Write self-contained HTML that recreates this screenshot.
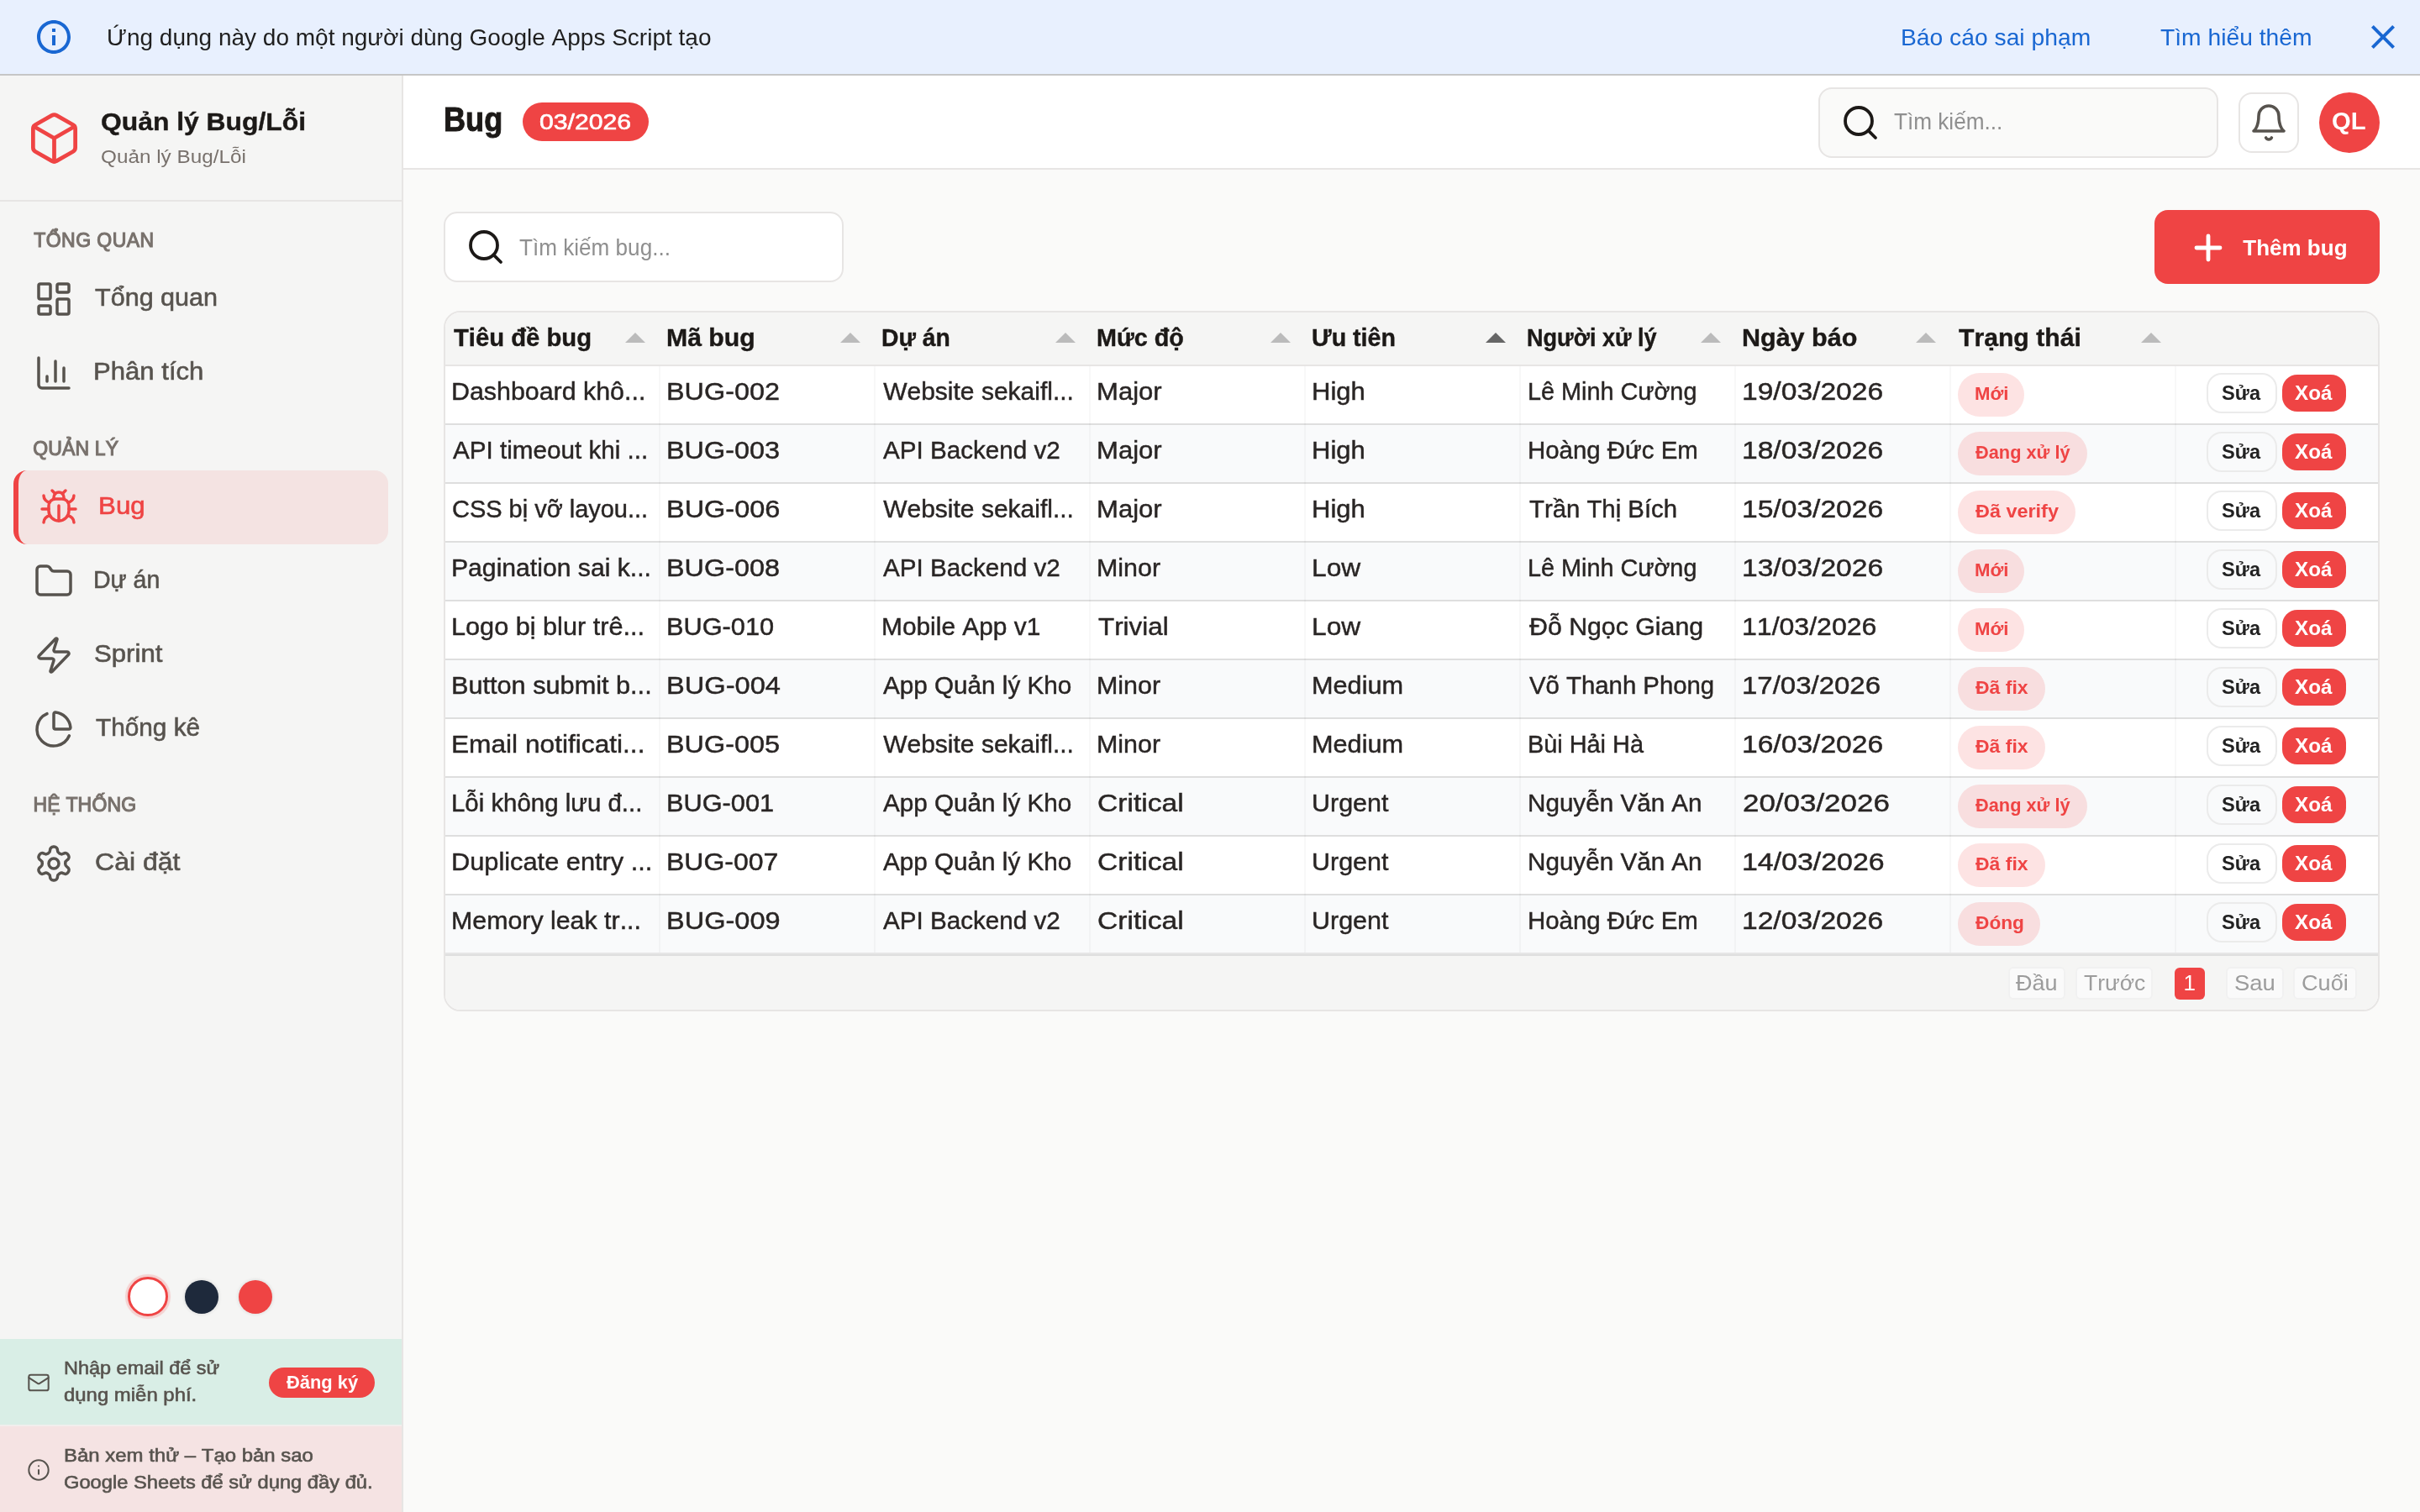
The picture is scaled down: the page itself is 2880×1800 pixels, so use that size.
<!DOCTYPE html>
<html lang="vi"><head><meta charset="utf-8"><title>Quản lý Bug/Lỗi</title>
<style>
html,body{margin:0;padding:0}
body{width:2880px;height:1800px;position:relative;overflow:hidden;background:#fafaf9;font-family:'Liberation Sans',sans-serif;font-kerning:none;font-variant-ligatures:none}
span{position:absolute;white-space:pre;line-height:1;transform-origin:0 0;font-family:'Liberation Sans',sans-serif;}
</style></head><body>
<div style="position:absolute;left:0px;top:0px;width:2880px;height:88px;background:#e8f0fe"></div>
<div style="position:absolute;left:0px;top:88px;width:2880px;height:2px;background:#c6c6c6"></div>
<svg style="position:absolute;left:40px;top:20px" width="48" height="48" viewBox="0 0 24 24" fill="#1967d2"><path d="M11 7h2v2h-2zm0 4h2v6h-2zm1-9C6.48 2 2 6.48 2 12s4.48 10 10 10 10-4.48 10-10S17.52 2 12 2zm0 18c-4.41 0-8-3.59-8-8s3.59-8 8-8 8 3.59 8 8-3.59 8-8 8z"/></svg>
<svg style="position:absolute;left:2812px;top:20px" width="48" height="48" viewBox="0 0 24 24" fill="#1967d2"><path d="M19 6.41L17.59 5 12 10.59 6.41 5 5 6.41 10.59 12 5 17.59 6.41 19 12 13.41 17.59 19 19 17.59 13.41 12z"/></svg>
<div style="position:absolute;left:0px;top:90px;width:478px;height:1710px;background:#f5f5f4"></div>
<div style="position:absolute;left:478px;top:90px;width:2px;height:1710px;background:#e7e5e4"></div>
<div style="position:absolute;left:0px;top:238px;width:478px;height:2px;background:#e7e5e4"></div>
<svg style="position:absolute;left:30.5px;top:130.5px" width="67" height="67" viewBox="0 0 24 24" fill="none" stroke="#ef4444" stroke-width="1.7" stroke-linecap="round" stroke-linejoin="round"><path d="M21 8a2 2 0 0 0-1-1.73l-7-4a2 2 0 0 0-2 0l-7 4A2 2 0 0 0 3 8v8a2 2 0 0 0 1 1.73l7 4a2 2 0 0 0 2 0l7-4A2 2 0 0 0 21 16Z"/><path d="m3.3 7 8.7 5 8.7-5"/><path d="M12 22V12"/></svg>
<div style="position:absolute;left:16px;top:560px;width:446px;height:88px;box-sizing:border-box;background:rgba(239,68,68,0.10);border-left:6px solid #ef4444;border-radius:16px"></div>
<svg style="position:absolute;left:40.0px;top:332.0px" width="48" height="48" viewBox="0 0 24 24" fill="none" stroke="#57534e" stroke-width="1.75" stroke-linecap="round" stroke-linejoin="round"><rect width="7" height="9" x="3" y="3" rx="1"/><rect width="7" height="5" x="14" y="3" rx="1"/><rect width="7" height="9" x="14" y="12" rx="1"/><rect width="7" height="5" x="3" y="16" rx="1"/></svg>
<svg style="position:absolute;left:40.0px;top:420.0px" width="48" height="48" viewBox="0 0 24 24" fill="none" stroke="#57534e" stroke-width="1.75" stroke-linecap="round" stroke-linejoin="round"><path d="M3 3v16a2 2 0 0 0 2 2h16"/><path d="M18 17V9"/><path d="M13 17V5"/><path d="M8 17v-3"/></svg>
<svg style="position:absolute;left:46.0px;top:580.0px" width="48" height="48" viewBox="0 0 24 24" fill="none" stroke="#ef4444" stroke-width="1.75" stroke-linecap="round" stroke-linejoin="round"><path d="m8 2 1.88 1.88"/><path d="M14.12 3.88 16 2"/><path d="M9 7.13v-1a3.003 3.003 0 1 1 6 0v1"/><path d="M12 20c-3.3 0-6-2.7-6-6v-3a4 4 0 0 1 4-4h4a4 4 0 0 1 4 4v3c0 3.3-2.7 6-6 6"/><path d="M12 20v-9"/><path d="M6.53 9C4.6 8.8 3 7.1 3 5"/><path d="M6 13H2"/><path d="M3 21c0-2.1 1.7-3.9 3.8-4"/><path d="M20.97 5c0 2.1-1.6 3.8-3.5 4"/><path d="M22 13h-4"/><path d="M17.2 17c2.1.1 3.8 1.9 3.8 4"/></svg>
<svg style="position:absolute;left:40.0px;top:668.0px" width="48" height="48" viewBox="0 0 24 24" fill="none" stroke="#57534e" stroke-width="1.75" stroke-linecap="round" stroke-linejoin="round"><path d="M20 20a2 2 0 0 0 2-2V8a2 2 0 0 0-2-2h-7.9a2 2 0 0 1-1.69-.9L9.6 3.9A2 2 0 0 0 7.93 3H4a2 2 0 0 0-2 2v13a2 2 0 0 0 2 2Z"/></svg>
<svg style="position:absolute;left:40.0px;top:756.0px" width="48" height="48" viewBox="0 0 24 24" fill="none" stroke="#57534e" stroke-width="1.75" stroke-linecap="round" stroke-linejoin="round"><path d="M4 14a1 1 0 0 1-.78-1.63l9.9-10.2a.5.5 0 0 1 .86.46l-1.92 6.02A1 1 0 0 0 13 10h7a1 1 0 0 1 .78 1.63l-9.9 10.2a.5.5 0 0 1-.86-.46l1.92-6.02A1 1 0 0 0 11 14z"/></svg>
<svg style="position:absolute;left:40.0px;top:844.0px" width="48" height="48" viewBox="0 0 24 24" fill="none" stroke="#57534e" stroke-width="1.75" stroke-linecap="round" stroke-linejoin="round"><path d="M21 12c.552 0 1.005-.449.95-.998a10 10 0 0 0-8.953-8.951c-.55-.055-.998.398-.998.95v8a1 1 0 0 0 1 1z"/><path d="M21.21 15.89A10 10 0 1 1 8 2.83"/></svg>
<svg style="position:absolute;left:40.0px;top:1004.0px" width="48" height="48" viewBox="0 0 24 24" fill="none" stroke="#57534e" stroke-width="1.75" stroke-linecap="round" stroke-linejoin="round"><path d="M12.22 2h-.44a2 2 0 0 0-2 2v.18a2 2 0 0 1-1 1.73l-.43.25a2 2 0 0 1-2 0l-.15-.08a2 2 0 0 0-2.73.73l-.22.38a2 2 0 0 0 .73 2.73l.15.1a2 2 0 0 1 1 1.72v.51a2 2 0 0 1-1 1.74l-.15.09a2 2 0 0 0-.73 2.73l.22.38a2 2 0 0 0 2.73.73l.15-.08a2 2 0 0 1 2 0l.43.25a2 2 0 0 1 1 1.73V20a2 2 0 0 0 2 2h.44a2 2 0 0 0 2-2v-.18a2 2 0 0 1 1-1.73l.43-.25a2 2 0 0 1 2 0l.15.08a2 2 0 0 0 2.73-.73l.22-.39a2 2 0 0 0-.73-2.73l-.15-.08a2 2 0 0 1-1-1.74v-.5a2 2 0 0 1 1-1.74l.15-.09a2 2 0 0 0 .73-2.73l-.22-.38a2 2 0 0 0-2.73-.73l-.15.08a2 2 0 0 1-2 0l-.43-.25a2 2 0 0 1-1-1.73V4a2 2 0 0 0-2-2z"/><circle cx="12" cy="12" r="3"/></svg>
<div style="position:absolute;left:152.2px;top:1519.8px;width:47.6px;height:47.6px;box-sizing:border-box;border-radius:50%;background:#fff;border:3.7px solid #ef4444;box-shadow:0 0 1px 3px rgba(239,68,68,0.2)"></div>
<div style="position:absolute;left:220px;top:1524px;width:40px;height:40px;border-radius:50%;background:#1e293b;box-shadow:0 0 3px 2px rgba(0,0,0,0.06)"></div>
<div style="position:absolute;left:284px;top:1524px;width:40px;height:40px;border-radius:50%;background:#ef4444;box-shadow:0 0 3px 2px rgba(0,0,0,0.06)"></div>
<div style="position:absolute;left:0px;top:1594px;width:478px;height:102px;background:#d9eee6"></div>
<svg style="position:absolute;left:32.0px;top:1631.5px" width="28" height="28" viewBox="0 0 24 24" fill="none" stroke="#57534e" stroke-width="1.75" stroke-linecap="round" stroke-linejoin="round"><rect width="20" height="16" x="2" y="4" rx="2"/><path d="m22 7-8.97 5.7a1.94 1.94 0 0 1-2.06 0L2 7"/></svg>
<div style="position:absolute;left:320px;top:1628px;width:126px;height:36px;border-radius:18px;background:#ef4444"></div>
<div style="position:absolute;left:0px;top:1696px;width:478px;height:2px;background:#f1eeed"></div>
<div style="position:absolute;left:0px;top:1698px;width:478px;height:102px;background:#f5e3e3"></div>
<svg style="position:absolute;left:32.0px;top:1735.7px" width="28" height="28" viewBox="0 0 24 24" fill="none" stroke="#57534e" stroke-width="1.75" stroke-linecap="round" stroke-linejoin="round"><circle cx="12" cy="12" r="10"/><path d="M12 16v-4"/><path d="M12 8h.01"/></svg>
<div style="position:absolute;left:480px;top:90px;width:2400px;height:110px;background:#fff"></div>
<div style="position:absolute;left:480px;top:200px;width:2400px;height:2px;background:#e7e5e4"></div>
<div style="position:absolute;left:622px;top:122px;width:150px;height:46px;border-radius:23px;background:#ef4444"></div>
<div style="position:absolute;left:2164px;top:104px;width:476px;height:84px;box-sizing:border-box;border:2px solid #e7e5e4;border-radius:16px;background:#fafaf9"></div>
<svg style="position:absolute;left:2190.0px;top:122.0px" width="48" height="48" viewBox="0 0 24 24" fill="none" stroke="#1c1917" stroke-width="1.9" stroke-linecap="round" stroke-linejoin="round"><circle cx="11" cy="11" r="8"/><path d="m21 21-4.3-4.3"/></svg>
<div style="position:absolute;left:2664px;top:110px;width:72px;height:72px;box-sizing:border-box;border:2px solid #e7e5e4;border-radius:16px;background:#fff"></div>
<svg style="position:absolute;left:2676.0px;top:122.0px" width="48" height="48" viewBox="0 0 24 24" fill="none" stroke="#57534e" stroke-width="1.8" stroke-linecap="round" stroke-linejoin="round"><path d="M6 8a6 6 0 0 1 12 0c0 7 3 9 3 9H3s3-2 3-9"/><path d="M10.3 21a1.94 1.94 0 0 0 3.4 0"/></svg>
<div style="position:absolute;left:2760px;top:110px;width:72px;height:72px;border-radius:50%;background:#ef4444"></div>
<div style="position:absolute;left:528px;top:252px;width:476px;height:84px;box-sizing:border-box;border:2px solid #e7e5e4;border-radius:16px;background:#fff"></div>
<svg style="position:absolute;left:554.0px;top:270.0px" width="48" height="48" viewBox="0 0 24 24" fill="none" stroke="#1c1917" stroke-width="1.9" stroke-linecap="round" stroke-linejoin="round"><circle cx="11" cy="11" r="8"/><path d="m21 21-4.3-4.3"/></svg>
<div style="position:absolute;left:2564px;top:250px;width:268px;height:88px;border-radius:16px;background:#ef4444"></div>
<svg style="position:absolute;left:2604.0px;top:270.5px" width="48" height="48" viewBox="0 0 24 24" fill="none" stroke="#fff" stroke-width="2.4" stroke-linecap="round" stroke-linejoin="round"><path d="M5 12h14"/><path d="M12 5v14"/></svg>
<div style="position:absolute;left:528px;top:370px;width:2304px;height:834px;box-sizing:border-box;border:2px solid #e7e5e4;border-radius:20px;background:#fff;overflow:hidden"><div style="position:absolute;left:0;top:0;width:2300px;height:62px;background:#f5f5f4"></div><div style="position:absolute;left:0;top:62px;width:2300px;height:2px;background:#e7e5e4"></div><div style="position:absolute;left:0;top:64px;width:2300px;height:68px;background:#fff"></div><div style="position:absolute;left:0;top:132px;width:2300px;height:2px;background:#dedede"></div><div style="position:absolute;left:0;top:134px;width:2300px;height:68px;background:#f9fafb"></div><div style="position:absolute;left:0;top:202px;width:2300px;height:2px;background:#dedede"></div><div style="position:absolute;left:0;top:204px;width:2300px;height:68px;background:#fff"></div><div style="position:absolute;left:0;top:272px;width:2300px;height:2px;background:#dedede"></div><div style="position:absolute;left:0;top:274px;width:2300px;height:68px;background:#f9fafb"></div><div style="position:absolute;left:0;top:342px;width:2300px;height:2px;background:#dedede"></div><div style="position:absolute;left:0;top:344px;width:2300px;height:68px;background:#fff"></div><div style="position:absolute;left:0;top:412px;width:2300px;height:2px;background:#dedede"></div><div style="position:absolute;left:0;top:414px;width:2300px;height:68px;background:#f9fafb"></div><div style="position:absolute;left:0;top:482px;width:2300px;height:2px;background:#dedede"></div><div style="position:absolute;left:0;top:484px;width:2300px;height:68px;background:#fff"></div><div style="position:absolute;left:0;top:552px;width:2300px;height:2px;background:#dedede"></div><div style="position:absolute;left:0;top:554px;width:2300px;height:68px;background:#f9fafb"></div><div style="position:absolute;left:0;top:622px;width:2300px;height:2px;background:#dedede"></div><div style="position:absolute;left:0;top:624px;width:2300px;height:68px;background:#fff"></div><div style="position:absolute;left:0;top:692px;width:2300px;height:2px;background:#dedede"></div><div style="position:absolute;left:0;top:694px;width:2300px;height:68px;background:#f9fafb"></div><div style="position:absolute;left:0;top:762px;width:2300px;height:2px;background:#dedede"></div><div style="position:absolute;left:254px;top:64px;width:2px;height:698px;background:rgba(0,0,0,0.027)"></div><div style="position:absolute;left:510px;top:64px;width:2px;height:698px;background:rgba(0,0,0,0.027)"></div><div style="position:absolute;left:766px;top:64px;width:2px;height:698px;background:rgba(0,0,0,0.027)"></div><div style="position:absolute;left:1022px;top:64px;width:2px;height:698px;background:rgba(0,0,0,0.027)"></div><div style="position:absolute;left:1278px;top:64px;width:2px;height:698px;background:rgba(0,0,0,0.027)"></div><div style="position:absolute;left:1534px;top:64px;width:2px;height:698px;background:rgba(0,0,0,0.027)"></div><div style="position:absolute;left:1790px;top:64px;width:2px;height:698px;background:rgba(0,0,0,0.027)"></div><div style="position:absolute;left:2058px;top:64px;width:2px;height:698px;background:rgba(0,0,0,0.027)"></div><div style="position:absolute;left:0;top:762px;width:2300px;height:2px;background:#e6e6e6"></div><div style="position:absolute;left:0;top:764px;width:2300px;height:2px;background:#dfdfdf"></div><div style="position:absolute;left:0;top:766px;width:2300px;height:64px;background:#f5f5f4"></div></div>
<div style="position:absolute;left:744px;top:396px;width:0;height:0;border-left:12px solid transparent;border-right:12px solid transparent;border-bottom:12px solid #bbb"></div>
<div style="position:absolute;left:1000px;top:396px;width:0;height:0;border-left:12px solid transparent;border-right:12px solid transparent;border-bottom:12px solid #bbb"></div>
<div style="position:absolute;left:1256px;top:396px;width:0;height:0;border-left:12px solid transparent;border-right:12px solid transparent;border-bottom:12px solid #bbb"></div>
<div style="position:absolute;left:1512px;top:396px;width:0;height:0;border-left:12px solid transparent;border-right:12px solid transparent;border-bottom:12px solid #bbb"></div>
<div style="position:absolute;left:1768px;top:396px;width:0;height:0;border-left:12px solid transparent;border-right:12px solid transparent;border-bottom:12px solid #666"></div>
<div style="position:absolute;left:2024px;top:396px;width:0;height:0;border-left:12px solid transparent;border-right:12px solid transparent;border-bottom:12px solid #bbb"></div>
<div style="position:absolute;left:2280px;top:396px;width:0;height:0;border-left:12px solid transparent;border-right:12px solid transparent;border-bottom:12px solid #bbb"></div>
<div style="position:absolute;left:2548px;top:396px;width:0;height:0;border-left:12px solid transparent;border-right:12px solid transparent;border-bottom:12px solid #bbb"></div>
<div style="position:absolute;left:2330px;top:444px;width:79px;height:52px;border-radius:26px;background:rgba(239,68,68,0.15)"></div>
<div style="position:absolute;left:2626px;top:444px;width:84px;height:48px;box-sizing:border-box;border:2px solid #ebebeb;border-radius:18px;background:#fff"></div>
<div style="position:absolute;left:2716px;top:446px;width:76px;height:44px;border-radius:18px;background:#ef4444"></div>
<div style="position:absolute;left:2330px;top:514px;width:154px;height:52px;border-radius:26px;background:rgba(239,68,68,0.15)"></div>
<div style="position:absolute;left:2626px;top:514px;width:84px;height:48px;box-sizing:border-box;border:2px solid #ebebeb;border-radius:18px;background:#f9fafb"></div>
<div style="position:absolute;left:2716px;top:516px;width:76px;height:44px;border-radius:18px;background:#ef4444"></div>
<div style="position:absolute;left:2330px;top:584px;width:140px;height:52px;border-radius:26px;background:rgba(239,68,68,0.15)"></div>
<div style="position:absolute;left:2626px;top:584px;width:84px;height:48px;box-sizing:border-box;border:2px solid #ebebeb;border-radius:18px;background:#fff"></div>
<div style="position:absolute;left:2716px;top:586px;width:76px;height:44px;border-radius:18px;background:#ef4444"></div>
<div style="position:absolute;left:2330px;top:654px;width:79px;height:52px;border-radius:26px;background:rgba(239,68,68,0.15)"></div>
<div style="position:absolute;left:2626px;top:654px;width:84px;height:48px;box-sizing:border-box;border:2px solid #ebebeb;border-radius:18px;background:#f9fafb"></div>
<div style="position:absolute;left:2716px;top:656px;width:76px;height:44px;border-radius:18px;background:#ef4444"></div>
<div style="position:absolute;left:2330px;top:724px;width:79px;height:52px;border-radius:26px;background:rgba(239,68,68,0.15)"></div>
<div style="position:absolute;left:2626px;top:724px;width:84px;height:48px;box-sizing:border-box;border:2px solid #ebebeb;border-radius:18px;background:#fff"></div>
<div style="position:absolute;left:2716px;top:726px;width:76px;height:44px;border-radius:18px;background:#ef4444"></div>
<div style="position:absolute;left:2330px;top:794px;width:104px;height:52px;border-radius:26px;background:rgba(239,68,68,0.15)"></div>
<div style="position:absolute;left:2626px;top:794px;width:84px;height:48px;box-sizing:border-box;border:2px solid #ebebeb;border-radius:18px;background:#f9fafb"></div>
<div style="position:absolute;left:2716px;top:796px;width:76px;height:44px;border-radius:18px;background:#ef4444"></div>
<div style="position:absolute;left:2330px;top:864px;width:104px;height:52px;border-radius:26px;background:rgba(239,68,68,0.15)"></div>
<div style="position:absolute;left:2626px;top:864px;width:84px;height:48px;box-sizing:border-box;border:2px solid #ebebeb;border-radius:18px;background:#fff"></div>
<div style="position:absolute;left:2716px;top:866px;width:76px;height:44px;border-radius:18px;background:#ef4444"></div>
<div style="position:absolute;left:2330px;top:934px;width:154px;height:52px;border-radius:26px;background:rgba(239,68,68,0.15)"></div>
<div style="position:absolute;left:2626px;top:934px;width:84px;height:48px;box-sizing:border-box;border:2px solid #ebebeb;border-radius:18px;background:#f9fafb"></div>
<div style="position:absolute;left:2716px;top:936px;width:76px;height:44px;border-radius:18px;background:#ef4444"></div>
<div style="position:absolute;left:2330px;top:1004px;width:104px;height:52px;border-radius:26px;background:rgba(239,68,68,0.15)"></div>
<div style="position:absolute;left:2626px;top:1004px;width:84px;height:48px;box-sizing:border-box;border:2px solid #ebebeb;border-radius:18px;background:#fff"></div>
<div style="position:absolute;left:2716px;top:1006px;width:76px;height:44px;border-radius:18px;background:#ef4444"></div>
<div style="position:absolute;left:2330px;top:1074px;width:98px;height:52px;border-radius:26px;background:rgba(239,68,68,0.15)"></div>
<div style="position:absolute;left:2626px;top:1074px;width:84px;height:48px;box-sizing:border-box;border:2px solid #ebebeb;border-radius:18px;background:#f9fafb"></div>
<div style="position:absolute;left:2716px;top:1076px;width:76px;height:44px;border-radius:18px;background:#ef4444"></div>
<div style="position:absolute;left:2390px;top:1151px;width:68px;height:39px;box-sizing:border-box;border:2px solid rgba(0,0,0,0.035);border-radius:6px;background:rgba(255,255,255,0.5)"></div>
<div style="position:absolute;left:2470px;top:1151px;width:92px;height:39px;box-sizing:border-box;border:2px solid rgba(0,0,0,0.035);border-radius:6px;background:rgba(255,255,255,0.5)"></div>
<div style="position:absolute;left:2649px;top:1151px;width:69px;height:39px;box-sizing:border-box;border:2px solid rgba(0,0,0,0.035);border-radius:6px;background:rgba(255,255,255,0.5)"></div>
<div style="position:absolute;left:2729px;top:1151px;width:76px;height:39px;box-sizing:border-box;border:2px solid rgba(0,0,0,0.035);border-radius:6px;background:rgba(255,255,255,0.5)"></div>
<div style="position:absolute;left:2588px;top:1152px;width:36px;height:38px;border-radius:6px;background:#ef4444"></div>
<div style="position:absolute;left:0;top:0;width:2880px;height:1800px;will-change:transform">
<span style="left:127.0px;top:31.0px;font-size:28px;font-weight:400;color:#1f1f1f;">Ứng dụng này do một người dùng Google Apps Script tạo</span>
<span style="left:2262.0px;top:30.5px;font-size:28px;font-weight:400;color:#1967d2;transform:scaleX(1.0091);">Báo cáo sai phạm</span>
<span style="left:2570.5px;top:30.5px;font-size:28px;font-weight:400;color:#1967d2;transform:scaleX(1.0085);">Tìm hiểu thêm</span>
<span style="left:120.4px;top:130.4px;font-size:30px;font-weight:700;color:#1c1917;transform:scaleX(1.0608);-webkit-text-stroke:0.4px #1c1917;">Quản lý Bug/Lỗi</span>
<span style="left:119.9px;top:175.8px;font-size:22px;font-weight:400;color:#78716c;transform:scaleX(1.1039);">Quản lý Bug/Lỗi</span>
<span style="left:40.3px;top:275.0px;font-size:23px;font-weight:400;color:#78716c;-webkit-text-stroke:1.1px #78716c;letter-spacing:0.44px;">TỔNG QUAN</span>
<span style="left:39.3px;top:523.0px;font-size:23px;font-weight:400;color:#78716c;-webkit-text-stroke:1.1px #78716c;letter-spacing:0.12px;">QUẢN LÝ</span>
<span style="left:39.6px;top:947.0px;font-size:23px;font-weight:400;color:#78716c;-webkit-text-stroke:1.1px #78716c;letter-spacing:0.16px;">HỆ THỐNG</span>
<span style="left:112.6px;top:339.0px;font-size:30px;font-weight:400;color:#57534e;transform:scaleX(1.0183);-webkit-text-stroke:0.6px #57534e;">Tổng quan</span>
<span style="left:111.1px;top:427.0px;font-size:30px;font-weight:400;color:#57534e;transform:scaleX(1.0366);-webkit-text-stroke:0.6px #57534e;">Phân tích</span>
<span style="left:116.7px;top:587.0px;font-size:30px;font-weight:400;color:#ef4444;transform:scaleX(1.0440);-webkit-text-stroke:0.6px #ef4444;">Bug</span>
<span style="left:111.1px;top:675.0px;font-size:30px;font-weight:400;color:#57534e;transform:scaleX(0.9500);-webkit-text-stroke:0.6px #57534e;">Dự án</span>
<span style="left:112.2px;top:763.0px;font-size:30px;font-weight:400;color:#57534e;transform:scaleX(1.0385);-webkit-text-stroke:0.6px #57534e;">Sprint</span>
<span style="left:113.9px;top:851.0px;font-size:30px;font-weight:400;color:#57534e;transform:scaleX(0.9919);-webkit-text-stroke:0.6px #57534e;">Thống kê</span>
<span style="left:112.8px;top:1011.0px;font-size:30px;font-weight:400;color:#57534e;transform:scaleX(1.0681);-webkit-text-stroke:0.6px #57534e;">Cài đặt</span>
<span style="left:75.8px;top:1618.0px;font-size:22px;font-weight:400;color:#57534e;transform:scaleX(1.0665);-webkit-text-stroke:0.6px #57534e;">Nhập email để sử</span>
<span style="left:75.8px;top:1650.0px;font-size:22px;font-weight:400;color:#57534e;transform:scaleX(1.0874);-webkit-text-stroke:0.6px #57534e;">dụng miễn phí.</span>
<span style="left:341.0px;top:1635.3px;font-size:22px;font-weight:700;color:#fff;transform:scaleX(0.9953);">Đăng ký</span>
<span style="left:75.8px;top:1722.0px;font-size:22px;font-weight:400;color:#57534e;transform:scaleX(1.0886);-webkit-text-stroke:0.6px #57534e;">Bản xem thử – Tạo bản sao</span>
<span style="left:75.8px;top:1753.5px;font-size:22px;font-weight:400;color:#57534e;transform:scaleX(1.0770);-webkit-text-stroke:0.6px #57534e;">Google Sheets để sử dụng đầy đủ.</span>
<span style="left:528.4px;top:122.0px;font-size:40px;font-weight:700;color:#1c1917;transform:scaleX(0.9027);-webkit-text-stroke:1px #1c1917;">Bug</span>
<span style="left:642.0px;top:133.0px;font-size:25px;font-weight:400;color:#fff;transform:scaleX(1.2079);-webkit-text-stroke:0.6px #fff;">03/2026</span>
<span style="left:2254.0px;top:131.4px;font-size:28px;font-weight:400;color:#8f8f8f;transform:scaleX(0.9341);">Tìm kiếm...</span>
<span style="left:2775.0px;top:129.8px;font-size:29px;font-weight:700;color:#fff;transform:scaleX(1.0079);">QL</span>
<span style="left:617.9px;top:280.8px;font-size:28px;font-weight:400;color:#8f8f8f;transform:scaleX(0.9326);">Tìm kiếm bug...</span>
<span style="left:2669.3px;top:281.8px;font-size:26px;font-weight:700;color:#fff;">Thêm bug</span>
<span style="left:539.8px;top:387.0px;font-size:30px;font-weight:700;color:#1c1917;transform:scaleX(0.9743);-webkit-text-stroke:0.4px #1c1917;">Tiêu đề bug</span>
<span style="left:793.2px;top:387.0px;font-size:30px;font-weight:700;color:#1c1917;transform:scaleX(1.0069);-webkit-text-stroke:0.4px #1c1917;">Mã bug</span>
<span style="left:1048.7px;top:387.0px;font-size:30px;font-weight:700;color:#1c1917;transform:scaleX(0.9434);-webkit-text-stroke:0.4px #1c1917;">Dự án</span>
<span style="left:1305.0px;top:387.0px;font-size:30px;font-weight:700;color:#1c1917;transform:scaleX(0.9590);-webkit-text-stroke:0.4px #1c1917;">Mức độ</span>
<span style="left:1560.9px;top:387.0px;font-size:30px;font-weight:700;color:#1c1917;transform:scaleX(0.9525);-webkit-text-stroke:0.4px #1c1917;">Ưu tiên</span>
<span style="left:1816.5px;top:387.0px;font-size:30px;font-weight:700;color:#1c1917;transform:scaleX(0.9018);-webkit-text-stroke:0.4px #1c1917;">Người xử lý</span>
<span style="left:2072.7px;top:387.0px;font-size:30px;font-weight:700;color:#1c1917;transform:scaleX(1.0167);-webkit-text-stroke:0.4px #1c1917;">Ngày báo</span>
<span style="left:2331.2px;top:387.0px;font-size:30px;font-weight:700;color:#1c1917;transform:scaleX(1.0056);-webkit-text-stroke:0.4px #1c1917;">Trạng thái</span>
<span style="left:536.8px;top:450.5px;font-size:30px;font-weight:400;color:#292524;transform:scaleX(1.0125);-webkit-text-stroke:0.45px #292524;">Dashboard khô...</span>
<span style="left:792.8px;top:450.5px;font-size:30px;font-weight:400;color:#292524;transform:scaleX(1.0787);-webkit-text-stroke:0.45px #292524;">BUG-002</span>
<span style="left:1051.2px;top:450.5px;font-size:30px;font-weight:400;color:#292524;-webkit-text-stroke:0.45px #292524;">Website sekaifl...</span>
<span style="left:1305.1px;top:450.5px;font-size:30px;font-weight:400;color:#292524;transform:scaleX(1.0356);-webkit-text-stroke:0.45px #292524;">Major</span>
<span style="left:1560.8px;top:450.5px;font-size:30px;font-weight:400;color:#292524;transform:scaleX(1.0345);-webkit-text-stroke:0.45px #292524;">High</span>
<span style="left:1817.6px;top:450.5px;font-size:30px;font-weight:400;color:#292524;transform:scaleX(0.9597);-webkit-text-stroke:0.45px #292524;">Lê Minh Cường</span>
<span style="left:2073.0px;top:450.5px;font-size:30px;font-weight:400;color:#292524;transform:scaleX(1.1197);-webkit-text-stroke:0.45px #292524;">19/03/2026</span>
<span style="left:2349.7px;top:458.0px;font-size:22px;font-weight:700;color:#ef4444;transform:scaleX(1.0079);">Mới</span>
<span style="left:2644.0px;top:455.6px;font-size:24px;font-weight:700;color:#222;transform:scaleX(0.9848);">Sửa</span>
<span style="left:2730.7px;top:455.6px;font-size:24px;font-weight:700;color:#fff;transform:scaleX(1.0093);">Xoá</span>
<span style="left:538.8px;top:520.5px;font-size:30px;font-weight:400;color:#292524;transform:scaleX(0.9880);-webkit-text-stroke:0.45px #292524;">API timeout khi ...</span>
<span style="left:792.8px;top:520.5px;font-size:30px;font-weight:400;color:#292524;transform:scaleX(1.0787);-webkit-text-stroke:0.45px #292524;">BUG-003</span>
<span style="left:1051.2px;top:520.5px;font-size:30px;font-weight:400;color:#292524;transform:scaleX(0.9873);-webkit-text-stroke:0.45px #292524;">API Backend v2</span>
<span style="left:1305.1px;top:520.5px;font-size:30px;font-weight:400;color:#292524;transform:scaleX(1.0356);-webkit-text-stroke:0.45px #292524;">Major</span>
<span style="left:1560.8px;top:520.5px;font-size:30px;font-weight:400;color:#292524;transform:scaleX(1.0345);-webkit-text-stroke:0.45px #292524;">High</span>
<span style="left:1817.5px;top:520.5px;font-size:30px;font-weight:400;color:#292524;transform:scaleX(0.9803);-webkit-text-stroke:0.45px #292524;">Hoàng Đức Em</span>
<span style="left:2073.0px;top:520.5px;font-size:30px;font-weight:400;color:#292524;transform:scaleX(1.1197);-webkit-text-stroke:0.45px #292524;">18/03/2026</span>
<span style="left:2350.7px;top:528.0px;font-size:22px;font-weight:700;color:#ef4444;transform:scaleX(0.9895);">Đang xử lý</span>
<span style="left:2644.0px;top:525.6px;font-size:24px;font-weight:700;color:#222;transform:scaleX(0.9848);">Sửa</span>
<span style="left:2730.7px;top:525.6px;font-size:24px;font-weight:700;color:#fff;transform:scaleX(1.0093);">Xoá</span>
<span style="left:537.8px;top:590.5px;font-size:30px;font-weight:400;color:#292524;transform:scaleX(0.9655);-webkit-text-stroke:0.45px #292524;">CSS bị vỡ layou...</span>
<span style="left:792.8px;top:590.5px;font-size:30px;font-weight:400;color:#292524;transform:scaleX(1.0820);-webkit-text-stroke:0.45px #292524;">BUG-006</span>
<span style="left:1051.2px;top:590.5px;font-size:30px;font-weight:400;color:#292524;-webkit-text-stroke:0.45px #292524;">Website sekaifl...</span>
<span style="left:1305.1px;top:590.5px;font-size:30px;font-weight:400;color:#292524;transform:scaleX(1.0356);-webkit-text-stroke:0.45px #292524;">Major</span>
<span style="left:1560.8px;top:590.5px;font-size:30px;font-weight:400;color:#292524;transform:scaleX(1.0345);-webkit-text-stroke:0.45px #292524;">High</span>
<span style="left:1819.5px;top:590.5px;font-size:30px;font-weight:400;color:#292524;transform:scaleX(0.9775);-webkit-text-stroke:0.45px #292524;">Trần Thị Bích</span>
<span style="left:2073.0px;top:590.5px;font-size:30px;font-weight:400;color:#292524;transform:scaleX(1.1197);-webkit-text-stroke:0.45px #292524;">15/03/2026</span>
<span style="left:2350.7px;top:598.0px;font-size:22px;font-weight:700;color:#ef4444;transform:scaleX(1.0645);">Đã verify</span>
<span style="left:2644.0px;top:595.6px;font-size:24px;font-weight:700;color:#222;transform:scaleX(0.9848);">Sửa</span>
<span style="left:2730.7px;top:595.6px;font-size:24px;font-weight:700;color:#fff;transform:scaleX(1.0093);">Xoá</span>
<span style="left:536.8px;top:660.5px;font-size:30px;font-weight:400;color:#292524;transform:scaleX(1.0047);-webkit-text-stroke:0.45px #292524;">Pagination sai k...</span>
<span style="left:792.8px;top:660.5px;font-size:30px;font-weight:400;color:#292524;transform:scaleX(1.0787);-webkit-text-stroke:0.45px #292524;">BUG-008</span>
<span style="left:1051.2px;top:660.5px;font-size:30px;font-weight:400;color:#292524;transform:scaleX(0.9873);-webkit-text-stroke:0.45px #292524;">API Backend v2</span>
<span style="left:1305.2px;top:660.5px;font-size:30px;font-weight:400;color:#292524;transform:scaleX(1.0137);-webkit-text-stroke:0.45px #292524;">Minor</span>
<span style="left:1560.8px;top:660.5px;font-size:30px;font-weight:400;color:#292524;transform:scaleX(1.0566);-webkit-text-stroke:0.45px #292524;">Low</span>
<span style="left:1817.6px;top:660.5px;font-size:30px;font-weight:400;color:#292524;transform:scaleX(0.9597);-webkit-text-stroke:0.45px #292524;">Lê Minh Cường</span>
<span style="left:2073.0px;top:660.5px;font-size:30px;font-weight:400;color:#292524;transform:scaleX(1.1197);-webkit-text-stroke:0.45px #292524;">13/03/2026</span>
<span style="left:2349.7px;top:668.0px;font-size:22px;font-weight:700;color:#ef4444;transform:scaleX(1.0079);">Mới</span>
<span style="left:2644.0px;top:665.6px;font-size:24px;font-weight:700;color:#222;transform:scaleX(0.9848);">Sửa</span>
<span style="left:2730.7px;top:665.6px;font-size:24px;font-weight:700;color:#fff;transform:scaleX(1.0093);">Xoá</span>
<span style="left:536.8px;top:730.5px;font-size:30px;font-weight:400;color:#292524;transform:scaleX(1.0217);-webkit-text-stroke:0.45px #292524;">Logo bị blur trê...</span>
<span style="left:793.0px;top:730.5px;font-size:30px;font-weight:400;color:#292524;transform:scaleX(1.0246);-webkit-text-stroke:0.45px #292524;">BUG-010</span>
<span style="left:1049.2px;top:730.5px;font-size:30px;font-weight:400;color:#292524;transform:scaleX(0.9957);-webkit-text-stroke:0.45px #292524;">Mobile App v1</span>
<span style="left:1307.2px;top:730.5px;font-size:30px;font-weight:400;color:#292524;transform:scaleX(1.0462);-webkit-text-stroke:0.45px #292524;">Trivial</span>
<span style="left:1560.8px;top:730.5px;font-size:30px;font-weight:400;color:#292524;transform:scaleX(1.0566);-webkit-text-stroke:0.45px #292524;">Low</span>
<span style="left:1819.5px;top:730.5px;font-size:30px;font-weight:400;color:#292524;transform:scaleX(1.0098);-webkit-text-stroke:0.45px #292524;">Đỗ Ngọc Giang</span>
<span style="left:2073.1px;top:730.5px;font-size:30px;font-weight:400;color:#292524;transform:scaleX(1.0680);-webkit-text-stroke:0.45px #292524;">11/03/2026</span>
<span style="left:2349.7px;top:738.0px;font-size:22px;font-weight:700;color:#ef4444;transform:scaleX(1.0079);">Mới</span>
<span style="left:2644.0px;top:735.6px;font-size:24px;font-weight:700;color:#222;transform:scaleX(0.9848);">Sửa</span>
<span style="left:2730.7px;top:735.6px;font-size:24px;font-weight:700;color:#fff;transform:scaleX(1.0093);">Xoá</span>
<span style="left:536.8px;top:800.5px;font-size:30px;font-weight:400;color:#292524;transform:scaleX(1.0223);-webkit-text-stroke:0.45px #292524;">Button submit b...</span>
<span style="left:792.8px;top:800.5px;font-size:30px;font-weight:400;color:#292524;transform:scaleX(1.0869);-webkit-text-stroke:0.45px #292524;">BUG-004</span>
<span style="left:1051.2px;top:800.5px;font-size:30px;font-weight:400;color:#292524;transform:scaleX(0.9889);-webkit-text-stroke:0.45px #292524;">App Quản lý Kho</span>
<span style="left:1305.2px;top:800.5px;font-size:30px;font-weight:400;color:#292524;transform:scaleX(1.0137);-webkit-text-stroke:0.45px #292524;">Minor</span>
<span style="left:1560.9px;top:800.5px;font-size:30px;font-weight:400;color:#292524;transform:scaleX(1.0223);-webkit-text-stroke:0.45px #292524;">Medium</span>
<span style="left:1819.5px;top:800.5px;font-size:30px;font-weight:400;color:#292524;transform:scaleX(0.9777);-webkit-text-stroke:0.45px #292524;">Võ Thanh Phong</span>
<span style="left:2073.0px;top:800.5px;font-size:30px;font-weight:400;color:#292524;transform:scaleX(1.0993);-webkit-text-stroke:0.45px #292524;">17/03/2026</span>
<span style="left:2350.7px;top:808.0px;font-size:22px;font-weight:700;color:#ef4444;transform:scaleX(1.0450);">Đã fix</span>
<span style="left:2644.0px;top:805.6px;font-size:24px;font-weight:700;color:#222;transform:scaleX(0.9848);">Sửa</span>
<span style="left:2730.7px;top:805.6px;font-size:24px;font-weight:700;color:#fff;transform:scaleX(1.0093);">Xoá</span>
<span style="left:536.7px;top:870.5px;font-size:30px;font-weight:400;color:#292524;transform:scaleX(1.0551);-webkit-text-stroke:0.45px #292524;">Email notificati...</span>
<span style="left:792.8px;top:870.5px;font-size:30px;font-weight:400;color:#292524;transform:scaleX(1.0787);-webkit-text-stroke:0.45px #292524;">BUG-005</span>
<span style="left:1051.2px;top:870.5px;font-size:30px;font-weight:400;color:#292524;-webkit-text-stroke:0.45px #292524;">Website sekaifl...</span>
<span style="left:1305.2px;top:870.5px;font-size:30px;font-weight:400;color:#292524;transform:scaleX(1.0137);-webkit-text-stroke:0.45px #292524;">Minor</span>
<span style="left:1560.9px;top:870.5px;font-size:30px;font-weight:400;color:#292524;transform:scaleX(1.0223);-webkit-text-stroke:0.45px #292524;">Medium</span>
<span style="left:1817.6px;top:870.5px;font-size:30px;font-weight:400;color:#292524;transform:scaleX(0.9620);-webkit-text-stroke:0.45px #292524;">Bùi Hải Hà</span>
<span style="left:2073.0px;top:870.5px;font-size:30px;font-weight:400;color:#292524;transform:scaleX(1.1197);-webkit-text-stroke:0.45px #292524;">16/03/2026</span>
<span style="left:2350.7px;top:878.0px;font-size:22px;font-weight:700;color:#ef4444;transform:scaleX(1.0450);">Đã fix</span>
<span style="left:2644.0px;top:875.6px;font-size:24px;font-weight:700;color:#222;transform:scaleX(0.9848);">Sửa</span>
<span style="left:2730.7px;top:875.6px;font-size:24px;font-weight:700;color:#fff;transform:scaleX(1.0093);">Xoá</span>
<span style="left:536.8px;top:940.5px;font-size:30px;font-weight:400;color:#292524;transform:scaleX(0.9803);-webkit-text-stroke:0.45px #292524;">Lỗi không lưu đ...</span>
<span style="left:793.0px;top:940.5px;font-size:30px;font-weight:400;color:#292524;transform:scaleX(1.0246);-webkit-text-stroke:0.45px #292524;">BUG-001</span>
<span style="left:1051.2px;top:940.5px;font-size:30px;font-weight:400;color:#292524;transform:scaleX(0.9889);-webkit-text-stroke:0.45px #292524;">App Quản lý Kho</span>
<span style="left:1306.1px;top:940.5px;font-size:30px;font-weight:400;color:#292524;transform:scaleX(1.1202);-webkit-text-stroke:0.45px #292524;">Critical</span>
<span style="left:1560.9px;top:940.5px;font-size:30px;font-weight:400;color:#292524;transform:scaleX(1.0159);-webkit-text-stroke:0.45px #292524;">Urgent</span>
<span style="left:1817.5px;top:940.5px;font-size:30px;font-weight:400;color:#292524;transform:scaleX(0.9879);-webkit-text-stroke:0.45px #292524;">Nguyễn Văn An</span>
<span style="left:2074.0px;top:940.5px;font-size:30px;font-weight:400;color:#292524;transform:scaleX(1.1642);-webkit-text-stroke:0.45px #292524;">20/03/2026</span>
<span style="left:2350.7px;top:948.0px;font-size:22px;font-weight:700;color:#ef4444;transform:scaleX(0.9895);">Đang xử lý</span>
<span style="left:2644.0px;top:945.6px;font-size:24px;font-weight:700;color:#222;transform:scaleX(0.9848);">Sửa</span>
<span style="left:2730.7px;top:945.6px;font-size:24px;font-weight:700;color:#fff;transform:scaleX(1.0093);">Xoá</span>
<span style="left:536.7px;top:1010.5px;font-size:30px;font-weight:400;color:#292524;transform:scaleX(1.0253);-webkit-text-stroke:0.45px #292524;">Duplicate entry ...</span>
<span style="left:792.9px;top:1010.5px;font-size:30px;font-weight:400;color:#292524;transform:scaleX(1.0656);-webkit-text-stroke:0.45px #292524;">BUG-007</span>
<span style="left:1051.2px;top:1010.5px;font-size:30px;font-weight:400;color:#292524;transform:scaleX(0.9889);-webkit-text-stroke:0.45px #292524;">App Quản lý Kho</span>
<span style="left:1306.1px;top:1010.5px;font-size:30px;font-weight:400;color:#292524;transform:scaleX(1.1202);-webkit-text-stroke:0.45px #292524;">Critical</span>
<span style="left:1560.9px;top:1010.5px;font-size:30px;font-weight:400;color:#292524;transform:scaleX(1.0159);-webkit-text-stroke:0.45px #292524;">Urgent</span>
<span style="left:1817.5px;top:1010.5px;font-size:30px;font-weight:400;color:#292524;transform:scaleX(0.9879);-webkit-text-stroke:0.45px #292524;">Nguyễn Văn An</span>
<span style="left:2072.9px;top:1010.5px;font-size:30px;font-weight:400;color:#292524;transform:scaleX(1.1293);-webkit-text-stroke:0.45px #292524;">14/03/2026</span>
<span style="left:2350.7px;top:1018.0px;font-size:22px;font-weight:700;color:#ef4444;transform:scaleX(1.0450);">Đã fix</span>
<span style="left:2644.0px;top:1015.6px;font-size:24px;font-weight:700;color:#222;transform:scaleX(0.9848);">Sửa</span>
<span style="left:2730.7px;top:1015.6px;font-size:24px;font-weight:700;color:#fff;transform:scaleX(1.0093);">Xoá</span>
<span style="left:536.8px;top:1080.5px;font-size:30px;font-weight:400;color:#292524;transform:scaleX(1.0114);-webkit-text-stroke:0.45px #292524;">Memory leak tr...</span>
<span style="left:792.8px;top:1080.5px;font-size:30px;font-weight:400;color:#292524;transform:scaleX(1.0844);-webkit-text-stroke:0.45px #292524;">BUG-009</span>
<span style="left:1051.2px;top:1080.5px;font-size:30px;font-weight:400;color:#292524;transform:scaleX(0.9873);-webkit-text-stroke:0.45px #292524;">API Backend v2</span>
<span style="left:1306.1px;top:1080.5px;font-size:30px;font-weight:400;color:#292524;transform:scaleX(1.1202);-webkit-text-stroke:0.45px #292524;">Critical</span>
<span style="left:1560.9px;top:1080.5px;font-size:30px;font-weight:400;color:#292524;transform:scaleX(1.0159);-webkit-text-stroke:0.45px #292524;">Urgent</span>
<span style="left:1817.5px;top:1080.5px;font-size:30px;font-weight:400;color:#292524;transform:scaleX(0.9803);-webkit-text-stroke:0.45px #292524;">Hoàng Đức Em</span>
<span style="left:2073.0px;top:1080.5px;font-size:30px;font-weight:400;color:#292524;transform:scaleX(1.1197);-webkit-text-stroke:0.45px #292524;">12/03/2026</span>
<span style="left:2350.7px;top:1088.0px;font-size:22px;font-weight:700;color:#ef4444;transform:scaleX(1.0309);">Đóng</span>
<span style="left:2644.0px;top:1085.6px;font-size:24px;font-weight:700;color:#222;transform:scaleX(0.9848);">Sửa</span>
<span style="left:2730.7px;top:1085.6px;font-size:24px;font-weight:700;color:#fff;transform:scaleX(1.0093);">Xoá</span>
<span style="left:2399.3px;top:1157.0px;font-size:26px;font-weight:400;color:#9c9c9c;transform:scaleX(1.0370);">Đầu</span>
<span style="left:2480.0px;top:1157.0px;font-size:26px;font-weight:400;color:#9c9c9c;transform:scaleX(1.0186);">Trước</span>
<span style="left:2598.5px;top:1157.0px;font-size:26px;font-weight:400;color:#fff;">1</span>
<span style="left:2658.6px;top:1157.0px;font-size:26px;font-weight:400;color:#9c9c9c;transform:scaleX(1.0558);">Sau</span>
<span style="left:2738.8px;top:1157.0px;font-size:26px;font-weight:400;color:#9c9c9c;transform:scaleX(1.0431);">Cuối</span>
</div>
</body></html>
